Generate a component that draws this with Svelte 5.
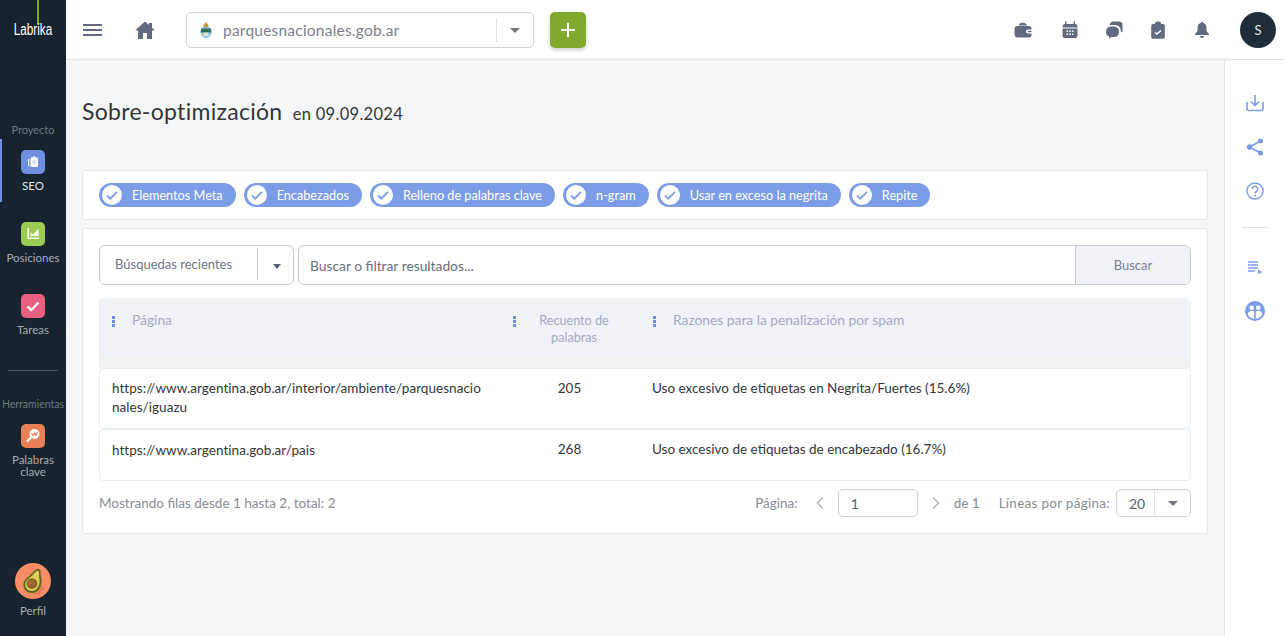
<script>
  const chips = ['Elementos Meta','Encabezados','Relleno de palabras clave','n-gram','Usar en exceso la negrita','Repite'];
  const rows = [
    { url:'https://www.argentina.gob.ar/interior/ambiente/parquesnacio nales/iguazu', n:205, why:'Uso excesivo de etiquetas en Negrita/Fuertes (15.6%)' },
    { url:'https://www.argentina.gob.ar/pais', n:268, why:'Uso excesivo de etiquetas de encabezado (16.7%)' }
  ];
</script>

<div class="app">
  <aside class="side">
    <div class="logo"><i></i><span>Labrika</span></div>
    <div class="grp first">Proyecto</div>
    <div class="item active">
      <b class="ic blue"><svg viewBox="0 0 24 24" width="24" height="24"><path fill="#fff" d="M10.500 7.500h1.300V7a.8.800 0 0 1 .8-.8h.8a.8.800 0 0 1 .8.800v.5H16a1 1 0 0 1 1 1V16a1 1 0 0 1-1 1h-5.500a1 1 0 0 1-1-1V8.500a1 1 0 0 1 1-1z"/><path fill="#fff" d="M7 9h1.300v7H7z"/><path stroke="#bccbf2" d="M11 11h4.500M11 13h4.500"/></svg></b>
      <span>SEO</span>
    </div>
    <div class="item">
      <b class="ic green"><svg viewBox="0 0 24 24" width="24" height="24"><path fill="#fff" d="M6.500 6H8v9.500h10V17H6.500z"/><path fill="#fff" d="M9.500 14v-3.500l2.500 2L17.500 7v7z"/></svg></b>
      <span>Posiciones</span>
    </div>
    <div class="item">
      <b class="ic pink"><svg viewBox="0 0 24 24" width="24" height="24"><path fill="none" stroke="#fff" stroke-width="2.400" d="M6.500 12.500l3.700 3.500 7.300-7.500"/></svg></b>
      <span>Tareas</span>
    </div>
    <hr />
    <div class="grp tools">Herramientas</div>
    <div class="item kw">
      <b class="ic orange"><svg viewBox="0 0 24 24" width="24" height="24"><circle cx="13.500" cy="10" r="5" fill="#fff"/><path stroke="#fff" stroke-width="2.200" stroke-linecap="round" d="M10 13.500l-3.500 3.500"/><path fill="none" stroke="#e87f55" stroke-width="1.200" d="M10.500 9.500l2 2 1-2.500 1.500 2 1.500-3"/></svg></b>
      <span>Palabras clave</span>
    </div>
    <div class="item prof">
      <b class="ava"><svg viewBox="0 0 36 36" width="36" height="36"><path fill="#d9704f" opacity=".6" d="M26 22l-8 9 7-1 5-5z"/><path fill="#5c6b1f" d="M22 6c2-1 4 1 3.600 3-.5 3 1.400 5 1 10-.5 6-4 11-9.600 11-5.500 0-9-4-8.600-9 .4-5 5-7 8-10 2-2 3-4 5.600-5z"/><path fill="#e3cf55" d="M22 8c1.500-.6 2.400.6 2 2.500-.6 3 1 5 .6 8.500-.5 5-3.500 9-7.600 9-4.300 0-7-3-6.700-7 .3-4 4.500-6 7-8.500 2-2 3-3.600 4.700-4.500z"/><circle cx="17" cy="20.500" r="5.300" fill="#8a5a2b"/><circle cx="16.500" cy="20" r="3.600" fill="#a06c38"/></svg></b>
      <span>Perfil</span>
    </div>
  </aside>

  <div class="body">
    <header class="top">
      <button class="burger" aria-label="menu"><i></i><i></i><i></i></button>
      <svg class="home" viewBox="0 0 20 18" width="20" height="18"><path fill="#616a80" d="M10 .500L0 9.500h3V18h5v-6h4v6h5V9.500h3l-3-2.700V2h-3v2.100z"/></svg>
      <div class="site">
        <svg viewBox="0 0 12 18" width="12" height="18"><path fill="#8cc6e4" d="M6 5c3 0 5.500 2 5.500 6 0 3-2.500 5.500-5.500 6.500-3-1-5.500-3.500-5.500-6.500 0-4 2.500-6 5.500-6z"/><path fill="#2f6f5e" d="M.8 11.500c0-1.500.2-3 .8-4h8.800c.6 1 .8 2.500.8 4z"/><path fill="#e9e3c8" d="M3.500 11.500h5v3.500h-5z"/><path fill="#c9973a" d="M3 5l3-4 3 4-3 1.500z"/></svg>
        <span class="name">parquesnacionales.gob.ar</span>
        <i class="sep"></i>
        <i class="caret"></i>
      </div>
      <button class="plus" aria-label="add"><svg viewBox="0 0 16 16" width="16" height="16"><path stroke="#fff" stroke-width="2" d="M8 1v14M1 8h14"/></svg></button>
      <div class="tools-top">
        <svg class="wallet" viewBox="0 0 18 18" width="18" height="18"><path fill="#616a80" d="M5.500 3c1-1.700 5-1.700 6.500 0l1.200 1.500H4.500zM3.500 5H15a2.500 2.500 0 0 1 2.500 2.500v1H14a2 2 0 0 0 0 4h3.500V14a2.500 2.500 0 0 1-2.500 2.500H4A3.500 3.500 0 0 1 .5 13V8a3 3 0 0 1 3-3z"/><path fill="#616a80" d="M14 9.800h3.500v1.400H14z"/></svg>
        <svg viewBox="0 0 18 18" width="18" height="18"><path fill="#616a80" fill-rule="evenodd" d="M4 .500h1.500V3h7V.500H14V3h.5a2.500 2.500 0 0 1 2 2v1.500h-15V5a2.500 2.500 0 0 1 2-2H4zM1.500 7.500h15V15a2 2 0 0 1-2 2h-11a2 2 0 0 1-2-2zM5.500 9.500v1.500H7V9.500zM8.300 9.500v1.500h1.500V9.500zM11 9.500v1.500h1.500V9.500zM5.500 12.500V14H7v-1.500zM8.300 12.500V14h1.500v-1.500zM11 12.500V14h1.500v-1.500z"/></svg>
        <svg viewBox="0 0 18 18" width="18" height="18"><path fill="#616a80" d="M8 .500h6a3.500 3.500 0 0 1 3.500 3.500v6.500l-1.500 1c0-5-2-7.500-7-7.500H4.600C5 2 6.300.500 8 .500z"/><path fill="#616a80" d="M6 5.500h3.500a5.300 5.300 0 0 1 0 10.500H6.300l-2.300 1.500.2-2A5.200 5.200 0 0 1 6 5.500z"/></svg>
        <svg viewBox="0 0 18 18" width="18" height="18"><path fill="#616a80" fill-rule="evenodd" d="M6 1.800C7 .2 11 .2 12 1.800V3h2a1.800 1.800 0 0 1 1.800 1.800V16a1.800 1.800 0 0 1-1.800 1.800H4A1.800 1.800 0 0 1 2.200 16V4.800A1.800 1.800 0 0 1 4 3h2zM5.500 12L8 14l4.500-4-1-1L8 12l-1.500-1z"/></svg>
        <svg viewBox="0 0 18 18" width="18" height="18"><path fill="#616a80" d="M9 .800a1.300 1.300 0 0 1 1.300 1.300c2.400.6 3.200 2.600 3.200 5v3l2.500 3v.9H2v-.9l2.500-3v-3c0-2.400.8-4.400 3.200-5A1.300 1.300 0 0 1 9 .800zM7 15h4a2 2 0 0 1-4 0z"/></svg>
      </div>
      <div class="user">S</div>
    </header>

    <div class="under">
      <main class="main">
        <h1>Sobre-optimización <small>en 09.09.2024</small></h1>
        <section class="card chips">
          {#each chips as c}
            <span class="chip">
              <svg viewBox="0 0 20 20" width="20" height="20"><circle cx="10" cy="10" r="10" fill="#fff"/><path fill="none" stroke="#7b9de8" stroke-width="1.800" d="M5 10.500l3.300 3.200L15 6.800"/></svg>
              {c}
            </span>
          {/each}
        </section>
        <section class="card res">
          <div class="search">
            <div class="recent"><span>Búsquedas recientes</span><i class="sep"></i><i class="caret dark"></i></div>
            <div class="input"><span>Buscar o filtrar resultados...</span><button>Buscar</button></div>
          </div>
          <div class="thead">
            <div class="th"><i class="dots"></i><span>Página</span></div>
            <div class="th mid"><i class="dots"></i><span>Recuento de palabras</span></div>
            <div class="th"><i class="dots"></i><span>Razones para la penalización por spam</span></div>
          </div>
          <div class="band"></div>
          {#each rows as r}
            <div class="row">
              <div class="url">{r.url}</div>
              <div class="num">{r.n}</div>
              <div class="why">{r.why}</div>
            </div>
          {/each}
          <div class="foot">
            <span class="tot">Mostrando filas desde 1 hasta 2, total: 2</span>
            <div class="pager">
              <span>Página:</span>
              <svg viewBox="0 0 10 14" width="10" height="14"><path fill="none" stroke="#b5b8bf" stroke-width="1.600" d="M8 1.500L2.500 7 8 12.500"/></svg>
              <div class="page">1</div>
              <svg viewBox="0 0 10 14" width="10" height="14"><path fill="none" stroke="#b5b8bf" stroke-width="1.600" d="M2 1.500L7.500 7 2 12.500"/></svg>
              <span class="of">de 1</span>
              <span class="lines">Líneas por página:</span>
              <div class="perpage"><span>20</span><i class="sep"></i><i class="caret"></i></div>
            </div>
          </div>
        </section>
      </main>
      <aside class="rail">
        <svg viewBox="0 0 18 18" width="18" height="18"><path fill="none" stroke="#7b9de8" stroke-width="1.600" d="M1 8v7a1.500 1.500 0 0 0 1.500 1.500h13A1.500 1.500 0 0 0 17 15V8M9 1v10M5 7.500l4 4 4-4"/></svg>
        <svg viewBox="0 0 18 18" width="18" height="18"><path fill="none" stroke="#7b9de8" stroke-width="1.800" d="M14.500 3L3.500 9l11 6"/><circle cx="14.500" cy="3" r="2.500" fill="#7b9de8"/><circle cx="3.500" cy="9" r="2.700" fill="#7b9de8"/><circle cx="14.500" cy="15" r="2.500" fill="#7b9de8"/></svg>
        <svg viewBox="0 0 18 18" width="18" height="18"><circle cx="9" cy="9" r="8" fill="none" stroke="#7b9de8" stroke-width="1.400"/><path fill="none" stroke="#7b9de8" stroke-width="1.500" d="M6.300 7a2.700 2.700 0 1 1 4.200 2.300c-1 .7-1.500 1.200-1.500 2.200"/><circle cx="9" cy="13.600" r="1" fill="#7b9de8"/></svg>
        <hr />
        <svg class="list" viewBox="0 0 14 14" width="14" height="14"><path stroke="#7b9de8" stroke-width="1.400" d="M0 2h10M0 5h10M0 8h10M0 11h7"/><path fill="#7b9de8" d="M10 9.500l4 2.500-4 2.500z"/></svg>
        <svg viewBox="0 0 20 20" width="20" height="20"><circle cx="10" cy="10" r="10" fill="#7b9de8"/><circle cx="6.700" cy="6.800" r="2.300" fill="#fff"/><circle cx="13.300" cy="6.800" r="2.300" fill="#fff"/><path fill="#fff" d="M2.500 13c.5-2 2.500-3.300 4.300-3.300 1 0 1.700.3 2.400.9V17.800C6 17.500 3.500 15.500 2.500 13zM10.800 10.600c.7-.6 1.400-.9 2.400-.9 1.800 0 3.800 1.300 4.300 3.300-1 2.500-3.500 4.500-6.700 4.800z"/></svg>
      </aside>
    </div>
  </div>
</div>

<style>
  :global(body){margin:0;background:#f5f6f8;}
  .app{display:flex;height:636px;width:1284px;overflow:hidden;font-family:"Lato","Noto Sans",sans-serif;font-size:13.500px;color:#33363c;}
  i{display:block;font-style:normal;}
  button{font:inherit;border:0;padding:0;}
  .side{width:66px;flex:none;background:#17232e;display:flex;flex-direction:column;align-items:stretch;color:#a6acb4;font-size:11.500px;text-align:center;}
  .logo{height:123px;position:relative;color:#fff;}
  .logo i{position:absolute;left:37px;top:0;width:2px;height:25px;background:#7ea92a;}
  .logo span{position:absolute;left:0;right:0;top:21px;font:16px/18px "Liberation Sans",sans-serif;transform:scaleX(.73);}
  .grp{color:#6e7780;font-size:11px;line-height:14px;}
  .first{margin-bottom:2px;}
  .item{height:63px;padding-top:11px;box-sizing:border-box;margin-bottom:9px;display:flex;flex-direction:column;align-items:center;line-height:12px;}
  .item span{margin-top:6px;}
  .item.active{box-shadow:inset 2px 0 #6f8fe0;color:#e6e8ea;}
  .ic{width:24px;height:24px;border-radius:5px;display:block;flex:none;}
  .ic svg{display:block;}
  .blue{background:#6f8fe0;}.green{background:#9ccb55;}.pink{background:#e8607f;}.orange{background:#e87f55;}
  .side hr{border:0;border-top:1px solid #4a545e;margin:15px 8px 0;}
  .tools{margin:26px -4px 2px;font-size:10.500px;white-space:nowrap;}
  .item.kw{height:auto;margin-bottom:0;}
  .prof{margin-top:auto;height:auto;padding:0;margin-bottom:19px;}
  .ava{width:36px;height:36px;border-radius:50%;background:#fb8c66;display:block;overflow:hidden;}
  .prof span{margin-top:6px;}

  .body{flex:1;display:flex;flex-direction:column;min-width:0;}
  .top{height:60px;box-sizing:border-box;background:#fff;border-bottom:1px solid #e4e4e8;display:flex;align-items:center;padding:1px 8px 0 17px;flex:none;}
  .burger{background:none;width:19px;display:flex;flex-direction:column;gap:3px;}
  .burger i{height:2px;background:#616a80;width:19px;}
  .home{margin-left:33px;}
  .site{margin-left:31px;width:348px;height:36px;box-sizing:border-box;border:1px solid #cfd0dc;border-radius:5px;display:flex;align-items:center;padding-left:13px;}
  .name{margin-left:11px;font-size:15.500px;color:#7d808c;letter-spacing:.22px;}
  .site .sep{margin-left:auto;width:1px;height:24px;background:#e4e4e8;}
  .caret{width:0;height:0;border:5px solid transparent;border-top:5.500px solid #75777f;border-bottom:0;}
  .site .caret{margin:0 13px 0 13px;}
  .caret.dark{border-top-color:#555e78;}
  .plus{margin-left:16px;width:36px;height:36px;border-radius:5px;background:#7ea92a;box-shadow:0 2px 4px rgba(0,0,0,.2);display:flex;align-items:center;justify-content:center;}
  .tools-top{margin-left:auto;display:flex;gap:26px;align-items:center;}
  .wallet{margin-right:3px;}
  .user{margin-left:29px;width:36px;height:36px;border-radius:50%;background:#1f2d38;color:#e8e8e8;display:flex;align-items:center;justify-content:center;font-size:13px;}

  .under{flex:1;display:flex;min-height:0;}
  .main{flex:1;padding:0 16px;min-width:0;}
  h1{margin:36px 0 0;height:74px;font-weight:400;font-size:23px;line-height:30px;color:#33363c;letter-spacing:.3px;}
  h1 small{font-size:16.500px;margin-left:4px;letter-spacing:.3px;}
  .card{background:#fff;border:1px solid #e7e6ea;border-radius:3px;box-sizing:border-box;}
  .chips{height:50px;display:flex;gap:8px;align-items:center;padding:0 16px;margin-bottom:8px;}
  .chip{height:24px;border-radius:12px;background:#7b9de8;color:#fff;display:flex;align-items:center;gap:10px;padding:0 13px 0 3px;font-size:12.700px;white-space:nowrap;}
  .res{height:306px;padding:16px 16px 0;}
  .search{display:flex;gap:4px;height:40px;}
  .recent{width:195px;flex:none;box-sizing:border-box;border:1px solid #c8c9d2;border-radius:6px;display:flex;align-items:center;padding:0 0 2px 15px;color:#6f7485;font-size:13px;}
  .recent .sep{margin-left:auto;width:1px;height:32px;background:#c8c9d2;}
  .recent .caret{margin:5px 12px 0 15px;border-width:4px;border-top-width:5px;border-bottom:0;}
  .input{flex:1;border:1px solid #c8c9d2;border-radius:6px;display:flex;align-items:center;padding-left:11px;color:#6a6d78;overflow:hidden;font-size:13.800px;}
  .input span{flex:1;}
  .input button{width:115px;height:100%;background:#eff2f6;border-left:1px solid #c8c9d2;color:#7d808c;font-size:13px;}
  .thead{margin-top:13px;height:59px;box-sizing:border-box;background:#eff2f7;border-radius:4px 4px 0 0;display:grid;grid-template-columns:401px 140px 1fr;color:#a4abc3;font-size:13.800px;}
  .th{display:flex;gap:17px;padding:13px 0 0 13px;line-height:17px;align-items:flex-start;}
  .th.mid{text-align:center;gap:0;font-size:12.600px;}
  .th.mid span{width:90px;margin:1px 0 0 13px;}
  .dots{width:3px;height:11px;margin-top:5px;flex:none;background:radial-gradient(circle at 1.500px 1.500px,#6f8fe0 1.500px,transparent 1.700px) 0 0/3px 4px repeat-y;}
  .band{height:11px;background:#f0f1f0;}
  .row{display:grid;grid-template-columns:400px 140px 1fr;border:1px solid #e6eef7;border-radius:4px;box-sizing:border-box;color:#33363c;font-size:13.500px;line-height:19px;padding-top:10px;height:61px;}
  .row + .row{height:52px;}
  .row + .row .url{padding-top:1px;}
  .url{padding-left:12px;width:372px;letter-spacing:.04px;}
  .num{text-align:center;padding-right:1px;}
  .why{padding-left:12px;}
  .foot{display:flex;align-items:center;justify-content:space-between;height:28px;margin-top:8px;color:#8a8d94;}
  .pager{display:flex;align-items:center;}
  .pager svg:first-of-type{margin:0 13px 0 17px;}
  .page{width:80px;height:28px;box-sizing:border-box;border:1px solid #cfd0d8;border-radius:5px;padding-left:12px;line-height:28px;color:#5d6068;font-size:14px;}
  .pager svg:last-of-type{margin:0 13px;}
  .lines{margin-left:19px;letter-spacing:.28px;}
  .perpage{margin-left:6px;width:75px;height:28px;box-sizing:border-box;border:1px solid #cfd0d8;border-radius:5px;display:flex;align-items:center;padding-left:12px;color:#5d6068;font-size:14px;}
  .perpage .sep{width:1px;height:26px;background:#e4e4e8;margin-left:auto;}
  .perpage .caret{margin:0 12px 0 13px;}

  .rail{width:60px;flex:none;box-sizing:border-box;background:#fff;border-left:1px solid #e4e4e8;display:flex;flex-direction:column;align-items:center;padding-top:34px;}
  .rail svg{flex:none;margin-bottom:26px;}
  .rail hr{width:26px;border:0;border-top:1px solid #e4e4e8;margin:1px 0 32px;}
  .rail .list{margin-bottom:27px;}
</style>
